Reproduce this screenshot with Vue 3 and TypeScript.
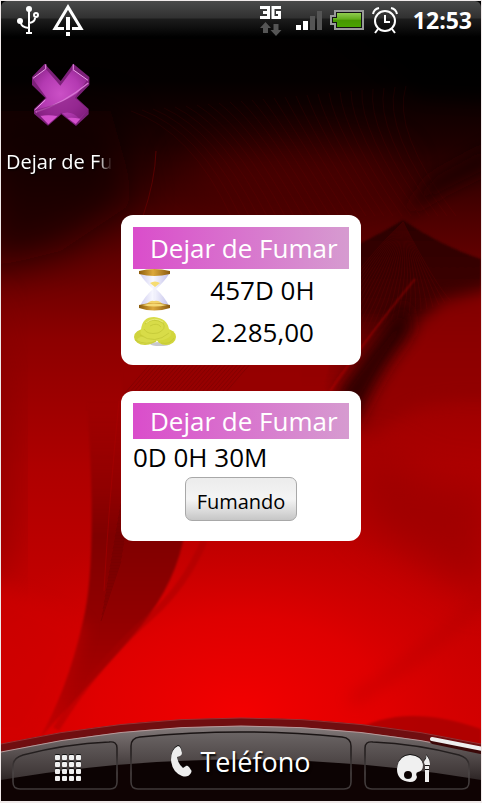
<script setup lang="ts">
import { ref } from 'vue'

interface Stat {
  icon: 'hourglass' | 'coins'
  label: string
  value: string
}

const clock = ref<string>('12:53')
const appName = 'Dejar de Fumar'
const stats = ref<Stat[]>([
  { icon: 'hourglass', label: 'Tiempo', value: '457D 0H' },
  { icon: 'coins', label: 'Dinero', value: '2.285,00' },
])
const elapsed = ref<string>('0D 0H 30M')
const gridDots = Array.from({ length: 16 }, (_, i) => ({ x: (i % 4) * 7, y: Math.floor(i / 4) * 7 }))
const threads = Array.from({ length: 26 }, (_, i) => i)
</script>

<template>
  <div class="screen">
    <svg class="wallpaper" viewBox="0 0 480 800" preserveAspectRatio="none" aria-hidden="true">
      <defs>
        <linearGradient id="base" x1="0" y1="0" x2="0" y2="1">
          <stop offset="0" stop-color="#000" />
          <stop offset=".1" stop-color="#040000" />
          <stop offset=".18" stop-color="#1e0000" />
          <stop offset=".27" stop-color="#4c0000" />
          <stop offset=".42" stop-color="#8c0000" />
          <stop offset=".58" stop-color="#ae0000" />
          <stop offset=".75" stop-color="#c40000" />
          <stop offset=".9" stop-color="#d00000" />
        </linearGradient>
        <radialGradient id="glow">
          <stop offset="0" stop-color="#f40000" />
          <stop offset=".5" stop-color="#e80000" stop-opacity=".7" />
          <stop offset="1" stop-color="#d00000" stop-opacity="0" />
        </radialGradient>
        <linearGradient id="fold" x1="0" y1="0" x2="0" y2="1">
          <stop offset="0" stop-color="#780000" stop-opacity="0" />
          <stop offset=".4" stop-color="#800000" />
          <stop offset=".65" stop-color="#920000" />
          <stop offset=".85" stop-color="#a80000" />
          <stop offset="1" stop-color="#c40000" />
        </linearGradient>
        <linearGradient id="peak" x1="0" y1="0" x2="0" y2="1">
          <stop offset="0" stop-color="#2a0000" />
          <stop offset=".5" stop-color="#420000" />
          <stop offset="1" stop-color="#960000" stop-opacity="0" />
        </linearGradient>
        <filter id="b2" x="-20%" y="-20%" width="140%" height="140%"><feGaussianBlur stdDeviation="1" /></filter>
        <filter id="b8" x="-40%" y="-40%" width="180%" height="180%"><feGaussianBlur stdDeviation="8" /></filter>
        <filter id="b20" x="-60%" y="-60%" width="220%" height="220%"><feGaussianBlur stdDeviation="20" /></filter>
      </defs>
      <rect width="480" height="800" fill="url(#base)" />
      <ellipse cx="240" cy="715" rx="290" ry="200" fill="url(#glow)" />
      <ellipse cx="290" cy="170" rx="110" ry="30" fill="#600000" opacity=".5" filter="url(#b20)" />
      <path d="M-20 110 H110 L135 200 L60 250 L-20 270Z" fill="#0a0000" opacity=".7" filter="url(#b20)" />
      <path d="M330 20 H500 V100 L420 95Z" fill="#000" opacity=".7" filter="url(#b8)" />
      <path d="M-20 280 Q20 420 5 560 L-20 600Z" fill="#700000" opacity=".6" filter="url(#b20)" />
      <!-- fine threads crossing the upper folds -->
      <g fill="none" stroke="#900000" stroke-width="1" opacity=".12">
        <path v-for="n in threads" :key="n" :d="`M${130 + n * 11} ${110 - n} Q${190 + n * 8} 130 ${230 + n * 9} 215`" />
      </g>
      <path d="M402 215 L430 178 L490 145 V165 L440 190Z" fill="#1c0000" opacity=".9" filter="url(#b8)" />
      <path d="M402 219 Q360 245 300 268 L300 400 H480 V258 Q440 245 402 219Z" fill="url(#peak)" filter="url(#b2)" />
      <g fill="none" stroke="#6a0000" stroke-width="1" opacity=".3">
        <path v-for="n in threads" :key="n" :d="`M402 221 Q${360 + n * 3} ${260 + n} ${300 + n * 6} ${350 - n * 2}`" />
      </g>
      <path d="M500 285 L440 300 Q390 350 355 400 L365 440 Q410 390 500 400Z" fill="#900000" opacity=".85" filter="url(#b8)" />
      <path d="M405 300 Q370 345 335 392 L352 430 Q375 375 410 330Z" fill="#240000" opacity=".9" filter="url(#b8)" />
      <path d="M414 278 Q372 328 329 390" fill="none" stroke="#c00000" stroke-width="1" filter="url(#b2)" />
      <path d="M155 150 Q154 180 142 215" fill="none" stroke="#6a0000" stroke-width="1" opacity=".7" />
      <path d="M360 440 Q440 500 490 480 V600 Q420 560 360 520Z" fill="#8a0000" opacity=".5" filter="url(#b20)" />
      <!-- lower left fold -->
      <path d="M86 400 Q97 560 82 620 Q66 690 38 738 Q110 660 140 625 Q176 580 184 530 L240 420 V400Z" fill="url(#fold)" filter="url(#b2)" />
      <path d="M121 360 H330 L320 395 H121Z" fill="#960000" opacity=".8" filter="url(#b2)" />
      <g fill="none" stroke="#5c0000" stroke-width="1" opacity=".3">
        <path v-for="n in threads" :key="n" :d="`M${124 + n * 4} 392 L${150 + n * 4} 362 M${100 + n} ${620 - n * 6} L${120 + n} ${560 - n * 6}`" />
      </g>
      <path d="M118 400 Q108 500 103 590" fill="none" stroke="#a80000" stroke-width="1" opacity=".6" />
      <path d="M203 540 Q184 585 150 615 Q96 662 55 728" fill="none" stroke="#a80000" stroke-width="7" opacity=".5" filter="url(#b2)" />
      <path d="M-20 575 Q40 600 84 625 Q66 690 30 745 H-20Z" fill="#d00000" opacity=".5" filter="url(#b8)" />
      <path d="M490 590 Q430 650 350 700" fill="none" stroke="#a80000" stroke-width="10" opacity=".4" filter="url(#b8)" />
      <path d="M350 732 Q400 700 480 728 V760 H380Z" fill="#a80000" opacity=".8" filter="url(#b2)" />
    </svg>

    <header class="status">
      <div class="status-group notices">
        <svg width="22" height="28" viewBox="0 0 22 28" role="img" aria-label="USB">
          <g fill="none" stroke="#fff" stroke-width="2">
            <path d="M12 3V27M9 27H15M4 16V17Q4 21 12 22M18 12Q18 16 12 17" />
            <circle cx="19" cy="9" r="2" />
          </g>
          <circle cx="12" cy="3" r="3" fill="#fff" />
          <circle cx="3" cy="15" r="3" fill="#fff" />
        </svg>
        <svg width="32" height="32" viewBox="0 0 32 32" role="img" aria-label="Aviso">
          <path d="M12 24.500H3L16 3 29 24.500H20" fill="none" stroke="#fff" stroke-width="3" />
          <path d="M14 13H18V26H14ZM14 28H18V32H14Z" fill="#fff" />
        </svg>
      </div>
      <div class="status-group">
        <svg class="network" width="22" height="31" viewBox="0 0 22 31" role="img" aria-label="3G">
          <g fill="none" stroke="#fff" stroke-width="3">
            <path d="M0 2.500H8.500V12.500H0M3 7.500H8" />
            <path d="M21 2.500H13V12.500H19.500V7.500H16" />
          </g>
          <path d="M5.500 17 11 23H8V28H3V23H0ZM16 31 10.500 25H13.500V19H18.500V25H21.500Z" fill="#555" />
        </svg>
        <svg class="signal" width="26" height="20" viewBox="0 0 26 20" role="img" aria-label="Señal">
          <path d="M0 15H5V20H0ZM7 11H12V20H7Z" fill="#fff" />
          <path d="M14 6H19V20H14ZM21 1H26V20H21Z" fill="#555" />
        </svg>
        <svg class="battery" width="34" height="20" viewBox="0 0 34 20" role="img" aria-label="Batería">
          <defs>
            <linearGradient id="charge" x1="0" y1="0" x2="0" y2="1">
              <stop offset="0" stop-color="#90cc50" /><stop offset=".45" stop-color="#62ac1c" />
              <stop offset=".5" stop-color="#469600" /><stop offset="1" stop-color="#4aa400" />
            </linearGradient>
          </defs>
          <path d="M5 1H33V19H5V14H1V6H5Z" fill="#111" stroke="#999" stroke-width="2" />
          <path d="M7 3H31V17H7V12H3V8H7Z" fill="url(#charge)" />
        </svg>
        <svg width="26" height="27" viewBox="0 0 26 27" role="img" aria-label="Alarma">
          <g fill="none" stroke="#fff" stroke-width="2">
            <circle cx="13" cy="14" r="10" />
            <path d="M13 8V15H18M1 7Q2 2 7 1M25 7Q24 2 19 1M6 22 3 26M20 22 23 26" />
          </g>
        </svg>
        <time class="clock">{{ clock }}</time>
      </div>
    </header>

    <main class="home">
      <a class="shortcut" href="#dejar">
        <svg width="58" height="64" viewBox="98 40 174 192" aria-hidden="true">
          <defs>
            <radialGradient id="xfill" cx=".5" cy=".45" r=".6">
              <stop offset="0" stop-color="#cb50c6" /><stop offset=".6" stop-color="#b43ab2" /><stop offset="1" stop-color="#8e268c" />
            </radialGradient>
          </defs>
          <path d="M136 42 184 94 222 42 270 82V106L232 145 268 178V194L230 229 186 194 146 228 104 192V178L138 145 98 106V82Z" fill="#7c2079" />
          <path d="M139 57 183 108 221 58 264 90 226 145 266 180 229 225 186 189 147 224 107 180 142 145 101 88Z" fill="url(#xfill)" />
          <path d="M101 86 139 58 M221 60 266 92 M106 181 138 151" fill="none" stroke="#eba0e8" stroke-width="3" />
          <path d="M139 44V58M222 44V60M109 187Q190 164 267 100" fill="none" stroke="#d877d4" stroke-width="4" />
          <path d="M107 181Q200 160 245 122L226 145 266 181 240 207Q212 176 174 198Q146 199 122 197Z" fill="#75166f" opacity=".5" />
          <path d="M124 200Q146 193 174 200L147 224ZM205 205Q218 202 243 207L229 223Z" fill="#d350cc" />
        </svg>
        <span class="shortcut-label">{{ appName }}</span>
      </a>

      <section class="card">
        <h2 class="title tall">{{ appName }}</h2>
        <div v-for="s in stats" :key="s.icon" class="stat">
          <svg v-if="s.icon === 'hourglass'" width="43" height="42" viewBox="0 0 43 42" role="img" :aria-label="s.label">
            <defs>
              <linearGradient id="wood">
                <stop offset="0" stop-color="#8c5c0c" /><stop offset=".45" stop-color="#dca83c" /><stop offset="1" stop-color="#8a5a10" />
              </linearGradient>
              <linearGradient id="glass">
                <stop offset="0" stop-color="#cfcdf0" /><stop offset=".45" stop-color="#f8f8ff" /><stop offset="1" stop-color="#c4c2ea" />
              </linearGradient>
            </defs>
            <path d="M7 5Q11 12 20 20Q11 28 7 37H36Q32 28 23 20Q32 12 36 5Z" fill="url(#glass)" />
            <path d="M17 14Q22 11 27 14L22 18Z" fill="#f6dc72" />
            <path d="M13 36Q17 31 21 32Q27 31 30 36Z" fill="#f2d268" />
            <path d="M21 18V31" stroke="#eeeefa" stroke-width="1" />
            <path d="M6 2Q21 -2 37 2V5Q21 9 6 5Z" fill="url(#wood)" />
            <path d="M6 36Q21 32 37 36V39Q21 44 6 39Z" fill="url(#wood)" />
            <path d="M9 36Q21 33 34 36Q22 39 9 36Z" fill="#f5d975" />
          </svg>
          <svg v-else width="43" height="42" viewBox="0 0 43 42" role="img" :aria-label="s.label">
            <ellipse cx="27" cy="33" rx="10" ry="2" fill="#c8c8cc" />
            <ellipse cx="12" cy="26" rx="11" ry="8" fill="#cfd33c" />
            <ellipse cx="33" cy="26" rx="10" ry="8" fill="#d2d63c" />
            <ellipse cx="14" cy="29" rx="10" ry="4" fill="#d8dc4c" />
            <path d="M8 19Q9 6 21 6Q34 7 36 18Q41 24 35 27Q24 33 11 25Q6 23 8 19Z" fill="#d8dc48" />
            <path d="M12 13Q20 6 30 12Q34 18 25 22Q14 24 11 18M17 15Q24 11 28 16M7 24Q22 34 36 22M2 29Q14 35 23 30M28 32Q37 34 41 27" fill="none" stroke="#c0c534" stroke-width="1" opacity=".7" />
            <path d="M13 12Q21 5 30 11" fill="none" stroke="#e8ea78" stroke-width="1" />
          </svg>
          <span class="value">{{ s.value }}</span>
        </div>
      </section>

      <section class="card">
        <h2 class="title">{{ appName }}</h2>
        <p class="elapsed">{{ elapsed }}</p>
        <button class="smoke" type="button">Fumando</button>
      </section>
    </main>

    <nav class="dock">
      <svg class="dock-art" viewBox="0 0 480 86" preserveAspectRatio="none" aria-hidden="true">
        <defs>
          <linearGradient id="bar" gradientUnits="userSpaceOnUse" x1="0" y1="8" x2="0" y2="66">
            <stop offset="0" stop-color="#8a8080" /><stop offset=".3" stop-color="#6b6363" /><stop offset="1" stop-color="#2c2424" />
          </linearGradient>
          <linearGradient id="key" gradientUnits="userSpaceOnUse" x1="0" y1="16" x2="0" y2="64">
            <stop offset="0" stop-color="#6c6666" /><stop offset="1" stop-color="#3c3434" />
          </linearGradient>
          <linearGradient id="rim" gradientUnits="userSpaceOnUse" x1="0" y1="16" x2="0" y2="76">
            <stop offset="0" stop-color="#181212" /><stop offset=".4" stop-color="#252020" /><stop offset=".7" stop-color="#4c4646" /><stop offset="1" stop-color="#3c3636" />
          </linearGradient>
          <clipPath id="keys">
            <path d="M12 51Q12 43 22 40Q64 29 108 27Q116 26 116 33V67Q116 74 109 74H19Q12 74 12 67Z" />
            <path d="M130 31Q130 23 139 22Q240 12 341 22Q350 23 350 31V67Q350 74 343 74H137Q130 74 130 67Z" />
            <path d="M364 33Q364 26 372 27Q416 29 458 40Q468 43 468 51V67Q468 74 461 74H371Q364 74 364 67Z" />
          </clipPath>
        </defs>
        <path d="M0 29Q240 -23 480 29V86H0Z" fill="#700e10" />
        <path d="M0 29Q240 -23 480 29" fill="none" stroke="#963033" stroke-width="1" />
        <path d="M0 37Q240 -15 480 37V86H0Z" fill="url(#bar)" />
        <path d="M0 37Q240 -15 480 37" fill="none" stroke="#b99a9b" stroke-width="1" />
        <path d="M0 65Q240 24 480 65V86H0Z" fill="#0f0303" />
        <g clip-path="url(#keys)">
          <rect width="480" height="86" fill="url(#key)" />
          <path d="M0 65Q240 24 480 65V86H0Z" fill="#0c0303" />
        </g>
        <g fill="none" stroke="url(#rim)" stroke-width="1.500">
          <path d="M12 51Q12 43 22 40Q64 29 108 27Q116 26 116 33V67Q116 74 109 74H19Q12 74 12 67Z" />
          <path d="M130 31Q130 23 139 22Q240 12 341 22Q350 23 350 31V67Q350 74 343 74H137Q130 74 130 67Z" />
          <path d="M364 33Q364 26 372 27Q416 29 458 40Q468 43 468 51V67Q468 74 461 74H371Q364 74 364 67Z" />
        </g>
        <path d="M432 26 480 36" fill="none" stroke="#3a0808" stroke-width="6" stroke-linecap="round" />
        <path d="M431 24 482 34" fill="none" stroke="#eee" stroke-width="4" stroke-linecap="round" />
      </svg>
      <button class="key" type="button" aria-label="Aplicaciones">
        <svg class="glyph" width="27" height="27" viewBox="0 0 27 27" aria-hidden="true">
          <rect v-for="(d, i) in gridDots" :key="i" :x="d.x" :y="d.y" width="5" height="5" rx="1" fill="#f0f0f0" />
        </svg>
      </button>
      <button class="key phone" type="button">
        <svg class="glyph" width="21" height="31" viewBox="0 0 21 31" aria-hidden="true">
          <path d="M7 0Q9 0 10 3L11 7Q11 9 9 10L6 11Q7 18 12 22L15 20Q16 19 18 21L20 24Q21 25 20 27Q17 32 11 30Q1 26 0 14Q0 3 7 0Z" fill="#eee" />
        </svg>
        <span>Teléfono</span>
      </button>
      <button class="key look" type="button" aria-label="Personalizar">
        <svg class="glyph" width="34" height="28" viewBox="0 0 34 28" aria-hidden="true">
          <path fill-rule="evenodd" d="M13 0Q25 1 26 10Q26 16 21 17Q18 18 20 22Q19 27 13 27Q0 26 0 14Q1 1 13 0ZM11 16A4 4 0 1 0 11 24A4 4 0 1 0 11 16Z" fill="#f0f0f0" />
          <path d="M29 0Q33 4 33 10H28Q26 7 28 5Q30 3 29 0ZM28 11H32V14H28ZM28 15H32V27H28Z" fill="#f0f0f0" />
        </svg>
      </button>
    </nav>
  </div>
</template>

<style>
body {
  margin: 0;
  background: #f4eeee;
}
</style>

<style scoped>
.screen {
  position: relative;
  box-sizing: border-box;
  min-height: 100vh;
  display: flex;
  flex-direction: column;
  overflow: hidden;
  border: 1px solid #f0eaea;
  border-bottom-width: 2px;
  background: #000;
  font-family: "Open Sans", "Noto Sans", sans-serif;
}
.wallpaper {
  position: absolute;
  inset: 0;
  width: 100%;
  height: 100%;
}
.status {
  position: relative;
  display: flex;
  justify-content: space-between;
  box-sizing: border-box;
  height: 38px;
  padding: 0 9px 0 16px;
  border-radius: 6px 6px 0 0;
  background: linear-gradient(#4a4a4a, #303030 17px, #1c1c1c 18px, #000 36px);
}
.status-group {
  display: flex;
  align-items: center;
  gap: 8px;
}
.notices {
  gap: 13px;
}
.network {
  margin-right: 6px;
}
.clock {
  margin-left: 7px;
  color: #fff;
  font-size: 23px;
  line-height: 38px;
  font-weight: 700;
}
.home {
  position: relative;
  flex: 1;
  display: flex;
  flex-direction: column;
  align-items: center;
}
.shortcut {
  align-self: flex-start;
  display: flex;
  flex-direction: column;
  align-items: center;
  width: 109px;
  height: 150px;
  margin: 24px 0 2px 5px;
  color: #fff;
  text-decoration: none;
}
.shortcut-label {
  align-self: stretch;
  margin-top: 20px;
  overflow: hidden;
  white-space: nowrap;
  font-size: 20px;
  line-height: 30px;
  text-shadow: 1px 1px 2px #000;
  mask-image: linear-gradient(to right, #000 92px, transparent 106px);
}
.card {
  box-sizing: border-box;
  width: 240px;
  min-height: 150px;
  margin-bottom: 26px;
  padding: 12px;
  border-radius: 12px;
  background: #fff;
  color: #000;
}
.title {
  margin: 0;
  padding-left: 17px;
  background: linear-gradient(to right, #da4dcb, #d69bd0);
  color: #fff;
  font-size: 26px;
  line-height: 36px;
  font-weight: 400;
  white-space: nowrap;
}
.tall {
  line-height: 42px;
}
.stat {
  display: flex;
  height: 42px;
}
.value {
  flex: 1;
  font-size: 26px;
  line-height: 42px;
  text-align: center;
}
.elapsed {
  margin: 0 0 2px;
  font-size: 26px;
  line-height: 36px;
}
.smoke {
  display: block;
  box-sizing: border-box;
  width: 112px;
  height: 44px;
  margin: 0 auto;
  padding: 6px 0 0;
  border: 1px solid #a8a8a8;
  border-radius: 7px;
  background: linear-gradient(#ececec, #f4f4f4 50%, #dedede 75%, #c6c6c6);
  color: #000;
  font-family: inherit;
  font-size: 20px;
  line-height: 36px;
}
.dock {
  position: relative;
  display: grid;
  grid-template-columns: 106fr 222fr 106fr;
  gap: 13px;
  box-sizing: border-box;
  height: 86px;
  padding: 22px 11px 11px;
}
.dock-art {
  position: absolute;
  inset: 0;
  width: 100%;
  height: 100%;
}
.key {
  position: relative;
  display: flex;
  align-items: center;
  justify-content: center;
  gap: 8px;
  padding: 10px 0 0 8px;
  border: 0;
  background: none;
  color: #fff;
  font-family: inherit;
  font-size: 27px;
  line-height: 36px;
  text-shadow: 1px 2px 2px #000;
}
.phone {
  padding: 0 0 4px;
}
.look {
  padding: 10px 6px 0 0;
}
.glyph {
  filter: drop-shadow(0 -1px 0 #111);
}
</style>
